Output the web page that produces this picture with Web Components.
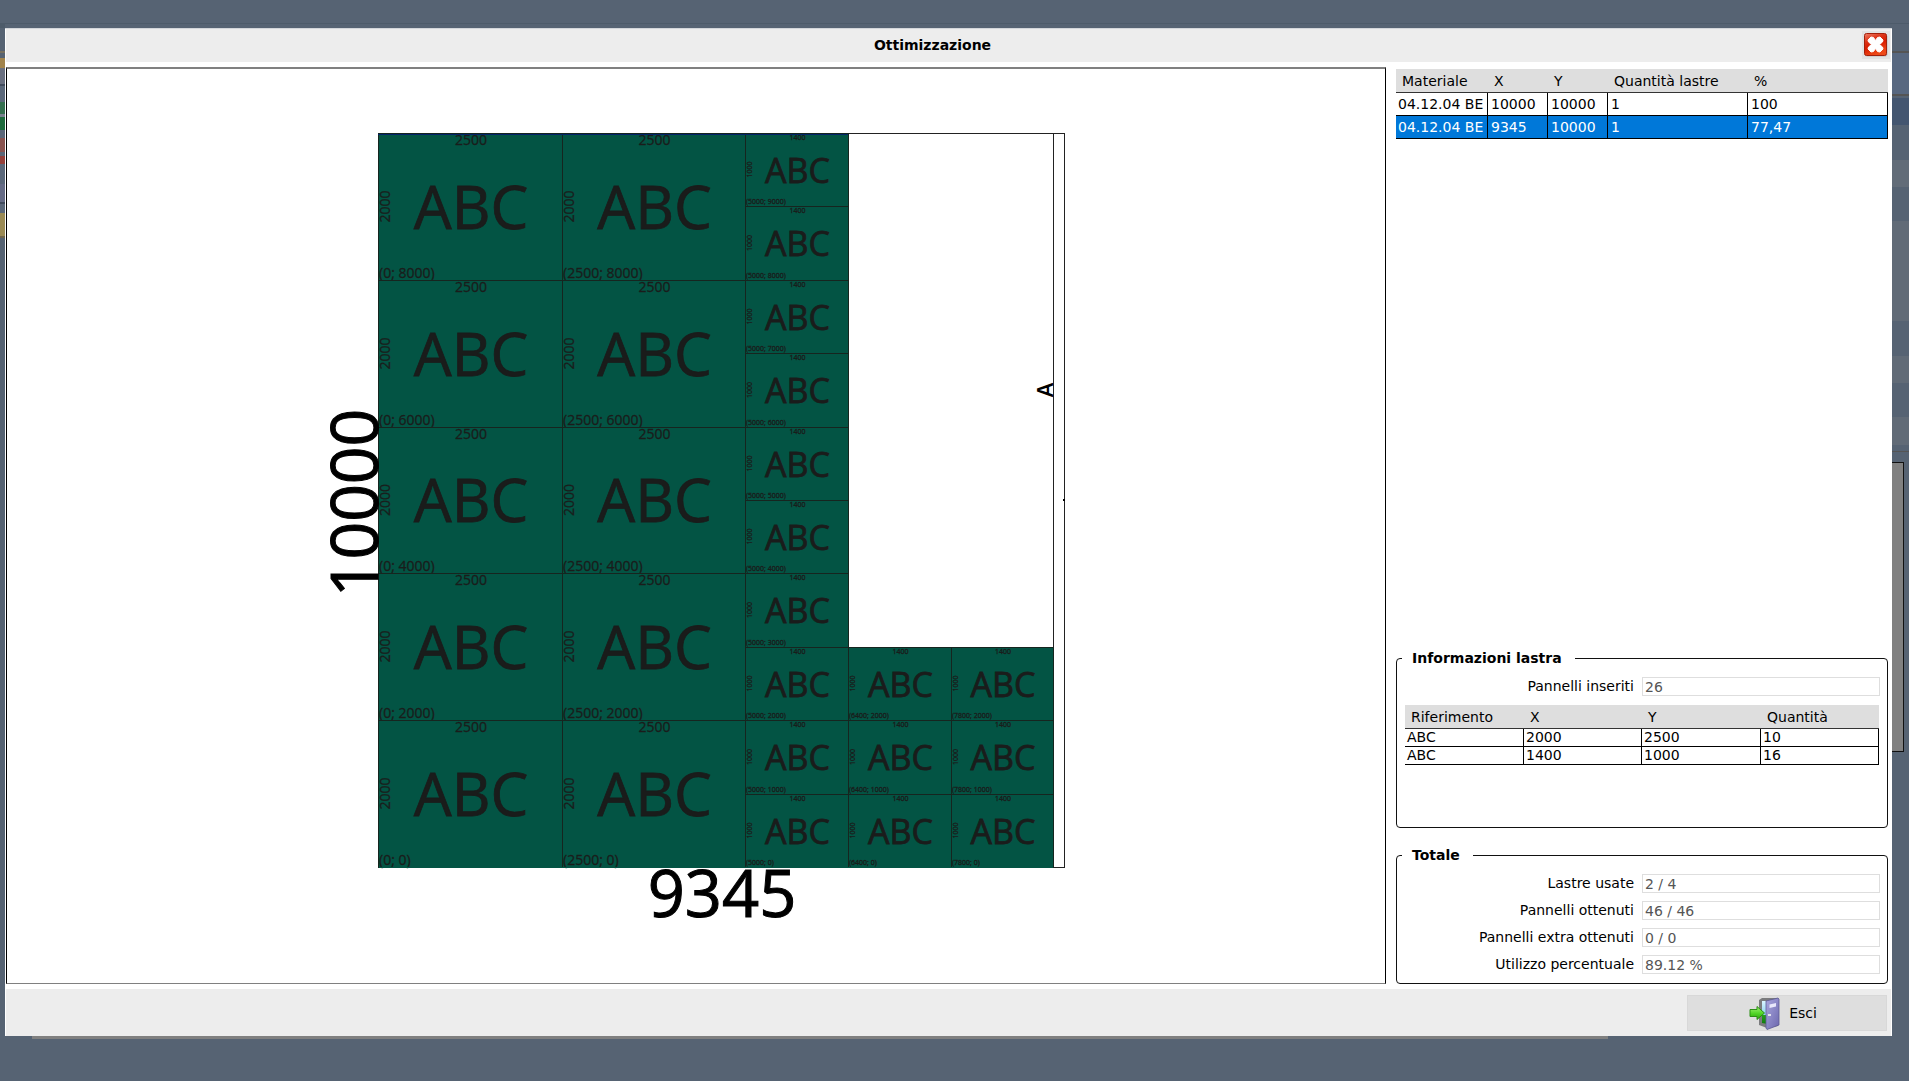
<!DOCTYPE html>
<html lang="it">
<head>
<meta charset="utf-8">
<title>Ottimizzazione</title>
<style>
  html, body { margin: 0; min-height: 100vh; }
  body { font: 14px/18px "DejaVu Sans", Verdana, sans-serif; color: #000; display: flex; }
  opt-desktop { flex: 1; }
</style>
</head>
<body>
<opt-desktop>
  <opt-dialog heading="Ottimizzazione">
    <cut-plan slot="canvas"></cut-plan>
    <data-grid slot="side" label="Lastre" columns="Materiale|X|Y|Quantità lastre|%" widths="92,60,60,140,140" selected="1"
      rows="04.12.04 BE|10000|10000|1|100;04.12.04 BE|9345|10000|1|77,47"></data-grid>
    <titled-group slot="side" heading="Informazioni lastra" class="push">
      <read-field label="Pannelli inseriti" value="26"></read-field>
      <data-grid compact label="Pannelli della lastra" columns="Riferimento|X|Y|Quantità" widths="119,118,119,118"
        rows="ABC|2000|2500|10;ABC|1400|1000|16"></data-grid>
    </titled-group>
    <titled-group slot="side" heading="Totale">
      <read-field label="Lastre usate" value="2 / 4"></read-field>
      <read-field label="Pannelli ottenuti" value="46 / 46"></read-field>
      <read-field label="Pannelli extra ottenuti" value="0 / 0"></read-field>
      <read-field label="Utilizzo percentuale" value="89.12 %"></read-field>
    </titled-group>
  </opt-dialog>
</opt-desktop>

<template id="t-desktop">
  <style>
    :host { display: flex; min-height: 100vh; background: #fff; }
    .back { flex: 1; display: flex; background: #566373; margin-right: 12px; min-width: 0; }
    .left { width: 5px; background: linear-gradient(#566373 0 23px, #4d5b6a 23px 28px, #566373 28px 51px, #77705f 51px 53px, #566373 53px 58px, #a2844c 58px 68px, #6a7080 68px 84px, #414b5c 84px 86px, #5b687a 86px 102px, #35704f 102px 114px, #7a8290 114px 117px, #1e6b3d 117px 130px, #5b687a 130px 138px, #8a5450 138px 152px, #5b687a 152px 156px, #95413b 156px 164px, #5b687a 164px 184px, #666c86 184px 202px, #414b5c 202px 204px, #5b687a 204px 213px, #9b8b55 213px 236px, #70654c 236px 238px, #566373 238px); }
    .mid { flex: 1; min-width: 0; display: flex; flex-direction: column; }
    .sky { height: 28px; background: linear-gradient(#566373 0 23px, #4d5b6a 23px 24px, #566373 24px); }
    slot { display: flex; flex: 1; min-height: 0; }
    .ground { height: 45px; }
    .shade { height: 3px; margin: 0 284px 0 27px; background: #808080; }
    .right { width: 17px; display: flex; flex-direction: column; }
    .list { height: 462px; background: linear-gradient(#566373 0 23px, #4d5b6a 23px 24px, #566373 24px 51px, #555 51px 53px, #586880 53px 94px, #555 94px 96px, #566373 96px 98px, #445670 98px 125px, #566373 125px 160px, #626c78 160px 187px, #566373 187px 221px, #616b77 221px 321px, #566373 321px 356px, #616b77 356px 383px, #566373 383px 417px, #616b77 417px 445px, #566373 445px 451px, #555 451px 452px, #566373 452px); }
    .panel { height: 288px; margin-right: 5px; border: 1px solid #111; border-left: 0; background: #808080; }
  </style>
  <div class="back">
    <div class="left"></div>
    <div class="mid"><div class="sky"></div><slot></slot><div class="ground"><div class="shade"></div></div></div>
    <div class="right"><div class="list"></div><div class="panel"></div></div>
  </div>
</template>

<template id="t-dialog">
  <style>
    :host { display: flex; flex-direction: column; flex: 1; min-width: 0; background: #fff; box-sizing: border-box; border-top: 1px solid #d3d6da; }
    header { display: flex; align-items: center; height: 33px; background: #ededed; margin: 0 1px; padding-right: 1px; }
    h1 { flex: 1; margin: 0 0 0 -3px; padding-bottom: 1px; font-size: 14px; font-weight: bold; text-align: center; }
    button { font: inherit; color: inherit; background: #dedede; border: 1px solid #d8d8d8; border-radius: 0; padding: 0; }
    .x { width: 28px; height: 28px; display: grid; place-items: center; background: #e2e2e2; border: 0; margin-bottom: 2px; }
    svg { display: block; }
    main { flex: 1; min-height: 0; display: flex; gap: 10px; padding: 5px 4px 5px 1px; }
    .canvas { flex: 1; min-width: 0; display: flex; border: 1px solid #000; border-top: 2px solid #808080; border-bottom-color: #808080; }
    .side { width: 492px; padding-top: 2px; display: flex; flex-direction: column; gap: 18px; }
    ::slotted(cut-plan) { flex: 1; }
    ::slotted(.push) { margin-top: auto; }
    footer { display: flex; justify-content: flex-end; background: #ededed; margin: 0 1px; padding: 6px 4px 5px; }
    .exit { width: 200px; height: 36px; display: flex; align-items: center; justify-content: center; gap: 9px; padding-right: 8px; }
  </style>
  <header>
    <h1></h1>
    <button class="x" aria-label="Chiudi">
      <svg width="24" height="24" viewBox="0 0 24 24">
        <defs><linearGradient id="r" x1="0" y1="0" x2=".4" y2="1"><stop offset="0" stop-color="#f0806a"/><stop offset=".35" stop-color="#dc3317"/><stop offset=".6" stop-color="#d81c00"/><stop offset="1" stop-color="#ee4a18"/></linearGradient></defs>
        <rect x="1" y="1.500" width="22.500" height="22" rx="2" fill="#999" opacity=".5"/>
        <rect x=".5" y=".5" width="22" height="22" rx="2" fill="url(#r)" stroke="#a3200c"/>
        <path d="M7 4 L9.500 4.500 L11.500 7.500 L13.500 4.500 L16 4 L19 7 L18.500 9 L15.500 11.500 L18.500 14 L19 16 L16 19 L13.500 18.500 L11.500 15.500 L9.500 18.500 L7 19 L4 16 L4.500 14 L7.500 11.500 L4.500 9 L4 7Z" fill="#fff" stroke="#fff" stroke-linejoin="round"/>
      </svg>
    </button>
  </header>
  <main><div class="canvas"><slot name="canvas"></slot></div><div class="side"><slot name="side"></slot></div></main>
  <footer>
    <button class="exit">
      <svg width="31" height="33" viewBox="0 0 31 33">
        <defs>
          <linearGradient id="d" x1="0" y1="0" x2="1" y2="1"><stop offset="0" stop-color="#a9a6de"/><stop offset="1" stop-color="#6c68ae"/></linearGradient>
          <linearGradient id="g" x1="0" y1="0" x2="0" y2="1"><stop offset="0" stop-color="#a4f277"/><stop offset=".55" stop-color="#4fd424"/><stop offset="1" stop-color="#2f9d12"/></linearGradient>
          <linearGradient id="s" x1="0" y1="0" x2="0" y2="1"><stop offset="0" stop-color="#d8f4ff"/><stop offset=".6" stop-color="#8fd2ef"/><stop offset=".62" stop-color="#26a01a"/><stop offset="1" stop-color="#0f7a10"/></linearGradient>
        </defs>
        <path d="M10 3 L13 1 H29 V29 L18 31 L10 28Z" fill="#7b7c7e"/>
        <path d="M13 4 H19 V27 L13 26Z" fill="url(#s)"/>
        <path d="M17 4 L29 1 L30 2 V28 L18 32.500 L17 31Z" fill="url(#d)" stroke="#5d5a94" stroke-width=".8"/>
        <path d="M20.500 7.500 L27 6 V9.500 L20.500 11Z" fill="#e8e8fb"/>
        <rect x="19" y="17" width="3" height="2" fill="#e4e4ee"/>
        <path d="M1 12.500 H8 V9.500 L15.500 16 L8 22.500 V19.500 H1Z" fill="url(#g)" stroke="#2b8f14"/>
      </svg>
      <span>Esci</span>
    </button>
  </footer>
</template>

<template id="t-grid">
  <style>
    :host { display: block; }
    :host([compact]) { min-height: 113px; margin: 1px 1px 0 0; }
    table { width: 100%; table-layout: fixed; border-collapse: separate; border-spacing: 0; }
    th { font-weight: normal; text-align: left; height: 23px; padding: 0 0 0 6px; background: #dedede; border-bottom: 1px solid #333; line-height: 18px; }
    td { height: 22px; padding: 0 0 0 3px; line-height: 18px; border-right: 1px solid #000; border-bottom: 1px solid #000; white-space: nowrap; overflow: hidden; }
    td:first-child { padding-left: 2px; }
    :host([compact]) td { height: 17px; line-height: 17px; padding-left: 2px; }
    .sel td { background: #0078d9; color: #fff; }
  </style>
  <table><colgroup></colgroup><thead><tr></tr></thead><tbody></tbody></table>
</template>

<template id="t-group">
  <style>
    :host { display: block; }
    fieldset { margin: 0; border: 1px solid #111; border-radius: 4px; padding: 10px 7px 9px 8px; min-width: 0; }
    legend { font-weight: bold; height: 18px; margin-left: -3px; padding: 0 13px 0 10px; }
    div { display: flex; flex-direction: column; gap: 8px; }
  </style>
  <fieldset><legend></legend><div><slot></slot></div></fieldset>
</template>

<template id="t-field">
  <style>
    :host { display: grid; grid-template-columns: 1fr 238px; gap: 8px; }
    label { text-align: right; line-height: 19px; }
    input { font: inherit; color: #555; box-sizing: border-box; width: 100%; height: 19px; padding: 0 2px; margin: 0; border: 1px solid #dedede; background: #fff; outline: 0; border-radius: 0; }
  </style>
  <label for="v"></label><input id="v" readonly>
</template>

<template id="t-plan">
  <style>
    :host { display: flex; min-width: 0; }
    svg { flex: 1; width: 100%; min-height: 0; font-family: "Open Sans", "Segoe UI", "Noto Sans", sans-serif; }
    rect, line { shape-rendering: crispEdges; }
    .piece { fill: #035444; stroke: #16251f; }
    .t { fill: #1a1c1b; stroke: #1a1c1b; stroke-width: .3px; }
    .name { stroke-width: .8px; }
    .size { stroke: #000; stroke-width: 1px; }
    .mid { text-anchor: middle; }
  </style>
  <svg viewBox="0 0 1378 914" role="img" aria-label="Schema di taglio"></svg>
</template>

<script>
class Base extends HTMLElement {
  use(id) {
    const root = this.attachShadow({ mode: "open" });
    root.append(document.getElementById(id).content.cloneNode(true));
    return root;
  }
}
customElements.define("opt-desktop", class extends Base {
  connectedCallback() { this.use("t-desktop"); }
});
customElements.define("opt-dialog", class extends Base {
  connectedCallback() { this.use("t-dialog").querySelector("h1").textContent = this.getAttribute("heading"); }
});
customElements.define("titled-group", class extends Base {
  connectedCallback() { this.use("t-group").querySelector("legend").textContent = this.getAttribute("heading"); }
});
customElements.define("read-field", class extends Base {
  connectedCallback() {
    const r = this.use("t-field");
    r.querySelector("label").textContent = this.getAttribute("label");
    r.querySelector("input").value = this.getAttribute("value");
  }
});
customElements.define("data-grid", class extends Base {
  connectedCallback() {
    const r = this.use("t-grid");
    r.querySelector("table").setAttribute("aria-label", this.getAttribute("label"));
    const widths = this.getAttribute("widths").split(",").map(Number);
    const total = widths.reduce((a, b) => a + b);
    for (const w of widths) {
      const c = document.createElement("col");
      c.style.width = (w / total * 100) + "%";
      r.querySelector("colgroup").append(c);
    }
    for (const h of this.getAttribute("columns").split("|")) {
      const th = document.createElement("th");
      th.scope = "col"; th.textContent = h;
      r.querySelector("thead tr").append(th);
    }
    this.getAttribute("rows").split(";").forEach((row, i) => {
      const tr = document.createElement("tr");
      if (this.getAttribute("selected") === String(i)) tr.className = "sel";
      for (const v of row.split("|")) {
        const td = document.createElement("td");
        td.textContent = v;
        tr.append(td);
      }
      r.querySelector("tbody").append(tr);
    });
  }
});
customElements.define("cut-plan", class extends Base {
  connectedCallback() {
    const svg = this.use("t-plan").querySelector("svg");
    // Sheet units to drawing units; y runs upwards from the sheet's bottom edge.
    const K = 0.0734, OX = 371, OY = 798;
    const X = v => Math.round(OX + v * K), Y = v => Math.round(OY - v * K);
    const text = (s, x, y, size, cls = "t", rot = false, extra = "") =>
      `<text class="${cls}" font-size="${size}" ${extra} ${rot ? `transform="translate(${x} ${y}) rotate(-90)"` : `x="${x}" y="${y}"`}>${s}</text>`;
    let out = `<rect x="${X(0)}.5" y="${Y(10000)}.5" width="${X(9345) - X(0)}" height="${Y(0) - Y(10000)}" fill="#fff" stroke="#222"/>`;
    out += `<line x1="${X(9200)}.5" x2="${X(9200)}.5" y1="${Y(10000)}" y2="${Y(0)}" stroke="#222"/>`;
    const piece = (x, y, w, h, big) => {
      const l = X(x), r = X(x + w), t = Y(y + h), b = Y(y), cx = (l + r) / 2, cy = (t + b) / 2;
      const f = big ? 14 : 7;
      out += `<rect class="piece" x="${l}.5" y="${t}.5" width="${r - l}" height="${b - t}"/>`;
      out += text("ABC", cx + 1, cy + (big ? 22 : 13), big ? 60 : 34, "t name mid");
      out += text(w, cx + 1, t + (big ? 12 : 7), f, "t mid");
      out += text(h, l + (big ? 12 : 7), cy, f, "t mid", true);
      out += text(`(${x}; ${y})`, l + 1, b - 2, f);
    };
    for (let y = 8000; y >= 0; y -= 2000) for (const x of [0, 2500]) piece(x, y, 2500, 2000, true);
    for (let y = 9000; y >= 0; y -= 1000) piece(5000, y, 1400, 1000, false);
    for (let y = 2000; y >= 0; y -= 1000) for (const x of [6400, 7800]) piece(x, y, 1400, 1000, false);
    out += `<line x1="${X(0)}" x2="${X(6400)}" y1="${Y(10000) + 1}.5" y2="${Y(10000) + 1}.5" stroke="#02246a"/>`;
    out += `<line x1="${X(0) + 1}" x2="${X(9200)}" y1="${Y(0)}.5" y2="${Y(0)}.5" stroke="#035444"/>`;
    out += text("10000", X(0), 434, 66, "size mid", true);
    out += text("9345", 715, 848, 65, "size mid");
    out += text("A", X(9200), 321, 22, "mid", true, `font-weight="600"`);
    out += `<rect x="${X(9345) - 1}" y="430" width="2" height="2"/>`;
    svg.innerHTML = out;
  }
});
</script>
</body>
</html>
